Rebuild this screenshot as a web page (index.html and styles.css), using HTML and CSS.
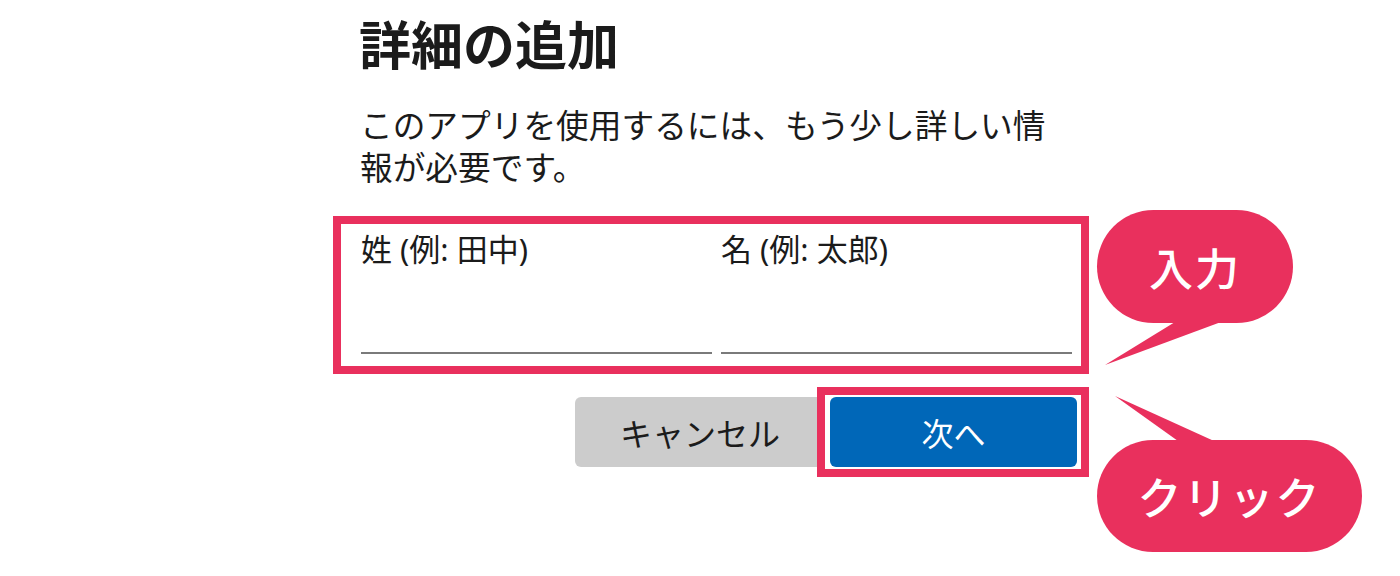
FILE: index.html
```html
<!DOCTYPE html>
<html lang="ja">
<head>
    <meta charset="UTF-8">
    <meta name="viewport" content="width=device-width, initial-scale=1.0">
    <title>詳細の追加</title>
    <link rel="stylesheet" href="styles.css">
</head>
<body>

    <div class="dialog">
        <h2 class="title">詳細の追加</h2>
        <p class="lead">このアプリを使用するには、もう少し詳しい情報が必要です。</p>

        <!-- 入力欄 -->
        <div class="fields mark">
            <label class="field">
                <span>姓 (例: 田中)</span>
                <input type="text">
            </label>
            <label class="field">
                <span>名 (例: 太郎)</span>
                <input type="text">
            </label>
        </div>

        <div class="actions">
            <button class="btn cancel">キャンセル</button>
            <div class="mark next-wrap">
                <button class="btn next">次へ</button>
            </div>
        </div>
    </div>

    <!-- 吹き出し -->
    <svg class="tails" width="1400" height="576" viewBox="0 0 1400 576">
        <polygon points="1175,322 1221,322 1105,365"/>
        <polygon points="1178,441 1214,441 1115,396"/>
    </svg>
    <div class="bubble bubble-input">入力</div>
    <div class="bubble bubble-click">クリック</div>

</body>
</html>
```

FILE: styles.css
```css
body { margin: 0; background: #fff; color: #1b1b1b; font-family: "Noto Sans", "Noto Sans CJK JP", sans-serif; position: relative; height: 576px; overflow: hidden; }
.dialog { margin-left: 333px; width: 756px; padding-top: 14px; }
.title { margin: 0; padding-left: 26px; font-size: 52px; line-height: 62px; font-weight: 700; }
.lead { margin: 29px 0 0; padding-left: 27px; width: 700px; font-size: 32.7px; line-height: 42px; }

.mark { border: 8px solid #e9305d; }
.fields { margin-top: 27px; padding: 7px 9px 12px 20px; display: grid; grid-template-columns: minmax(0, 1fr) minmax(0, 1fr); column-gap: 9px; }
.field { display: flex; flex-direction: column; min-width: 0; }
.field span { font-size: 31px; line-height: 36px; }
.field input { width: 100%; box-sizing: border-box; height: 87px; border: none; border-bottom: 2px solid #7a7a7a; padding: 0; margin: 0; font-size: 30px; outline: none; }

.actions { margin-top: 13px; display: flex; justify-content: flex-end; align-items: center; }
.btn { height: 70px; border: none; border-radius: 6px; font-family: "Noto Sans CJK JP", sans-serif; font-size: 32px; cursor: pointer; }
.cancel { width: 250px; margin-right: -8px; background: #cccccc; color: #1b1b1b; }
.next-wrap { position: relative; padding: 2px 4px 2px 5px; background: #fff; }
.next { display: block; width: 247px; background: #0067b8; color: #fff; }

.tails { position: absolute; left: 0; top: 0; fill: #e9305d; }
.bubble { position: absolute; display: flex; align-items: center; justify-content: center; background: #e9305d; color: #fff; border-radius: 57px; font-family: "Noto Sans CJK JP", sans-serif; font-size: 44px; font-weight: 500; letter-spacing: 2px; }
.bubble-input { left: 1097px; top: 210px; width: 196px; height: 113px; }
.bubble-click { left: 1097px; top: 440px; width: 265px; height: 112px; }
```
